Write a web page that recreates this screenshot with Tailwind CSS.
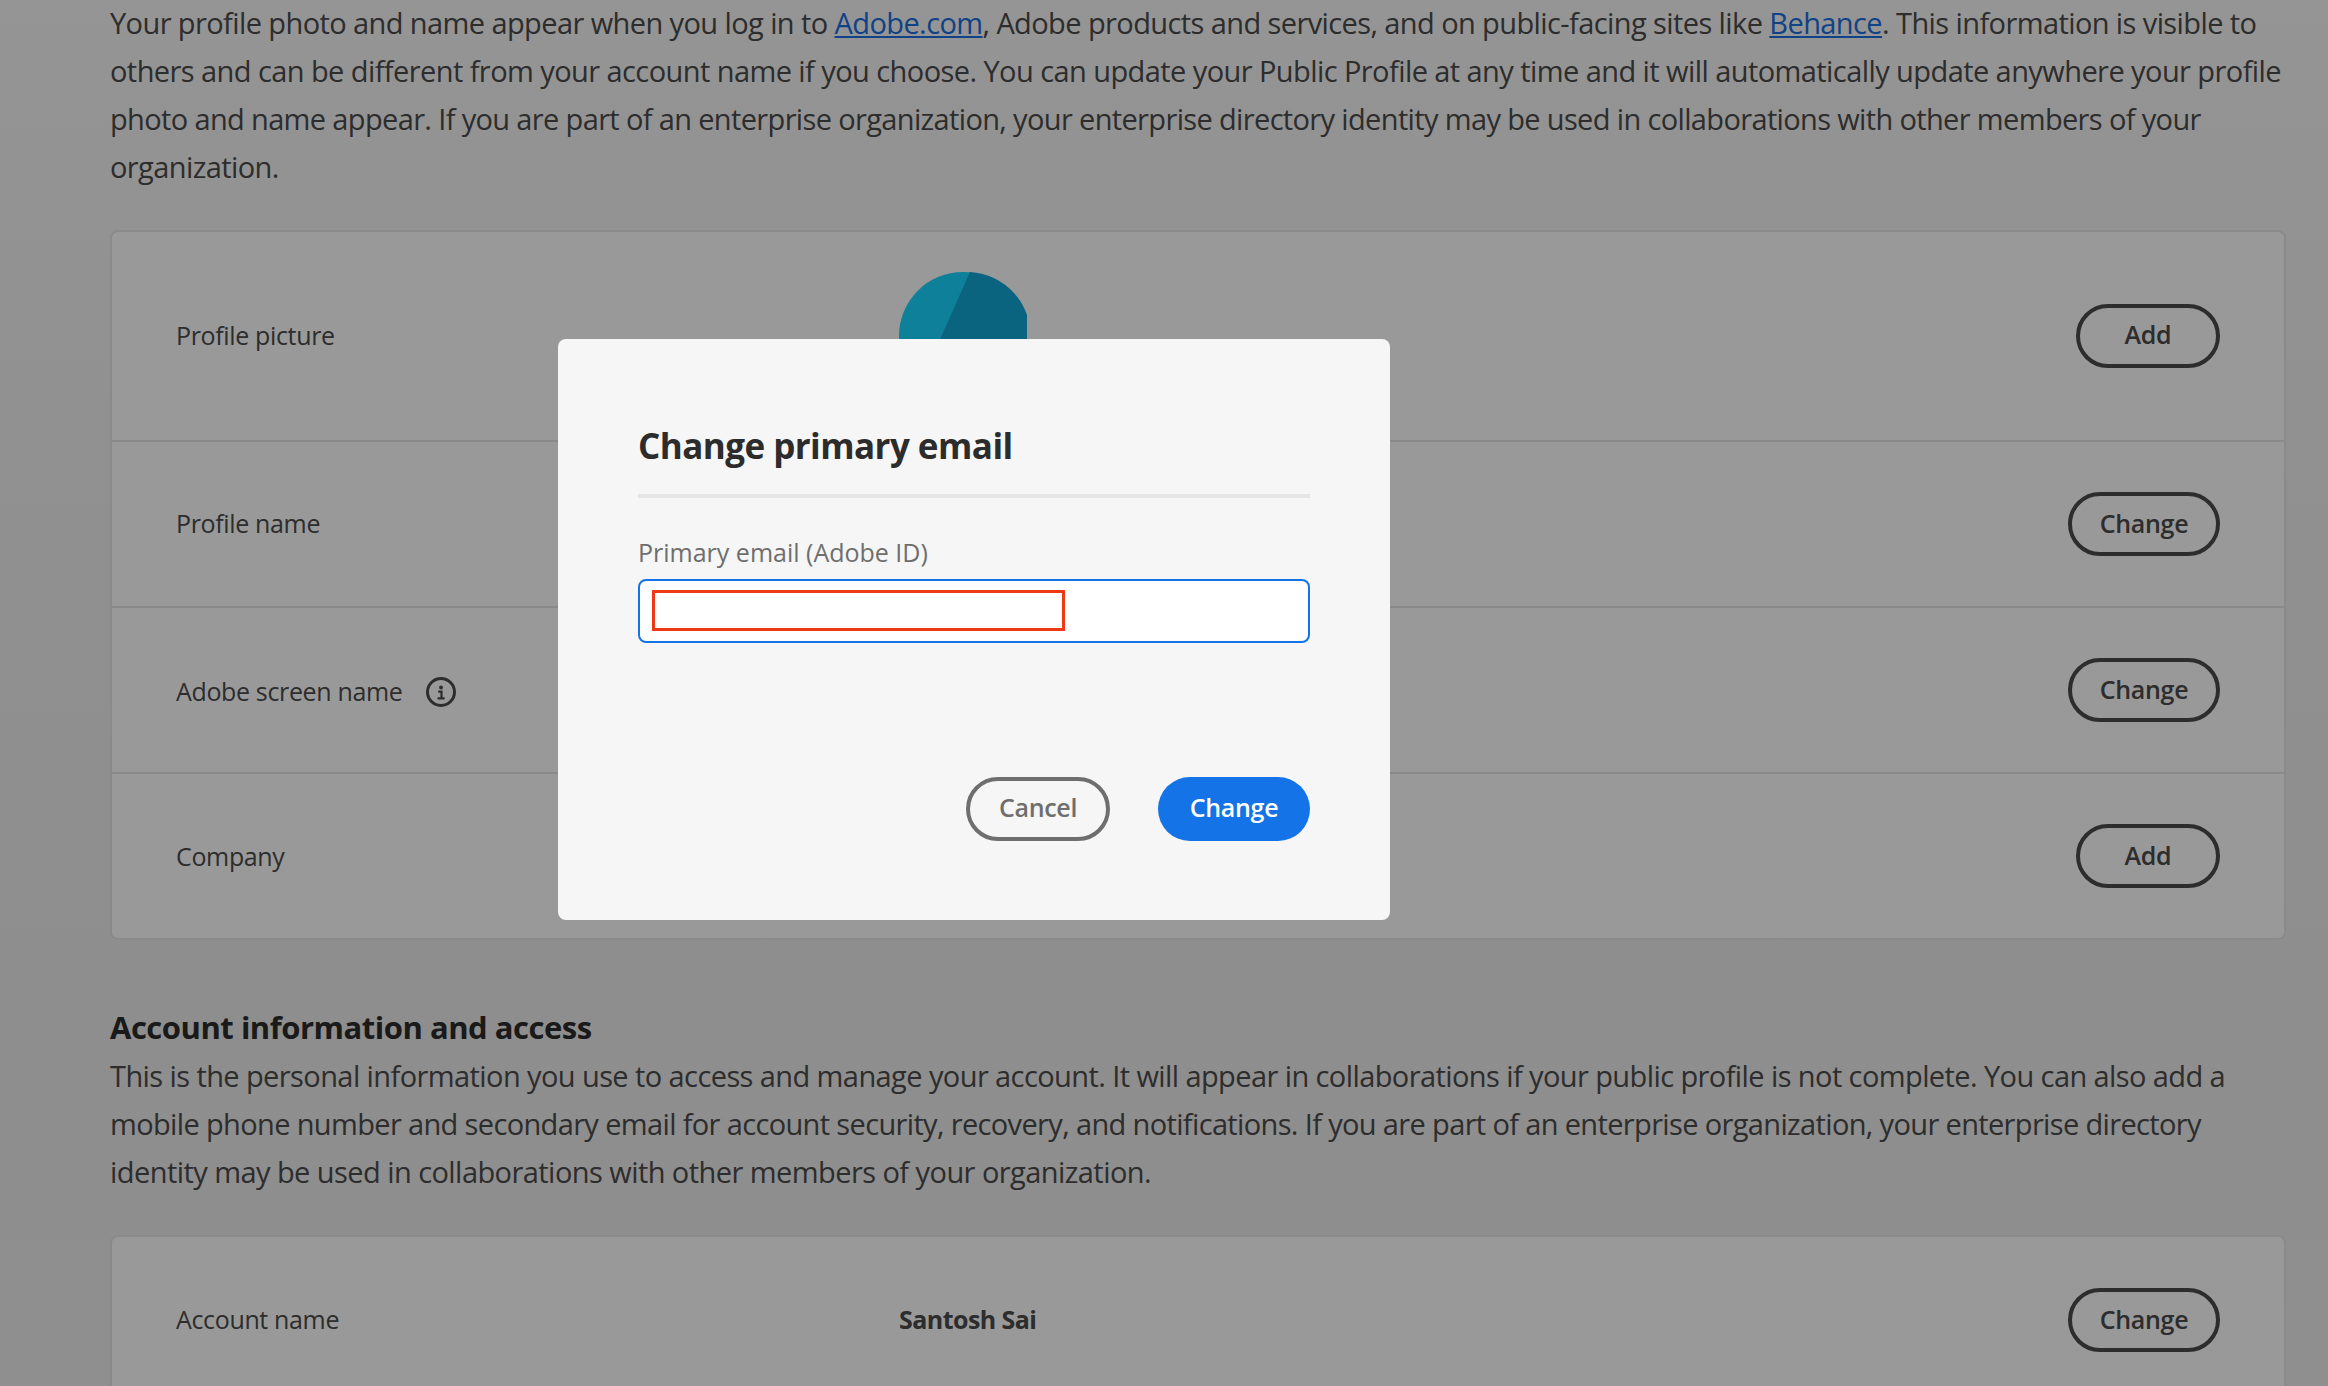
<!DOCTYPE html>
<html lang="en">
<head>
<meta charset="utf-8">
<script src="https://cdn.jsdelivr.net/npm/@tailwindcss/browser@4"></script>
<title>Change primary email</title>
</head>
<body class="h-[1386px] w-[2328px] overflow-hidden bg-[linear-gradient(180deg,#f8f8f8_0px,#f2f2f2_400px,#ededed_1000px,#eeeeee_1386px)] font-['Open_Sans',sans-serif] text-[#4b4b4b]">
<div class="relative h-[1386px] w-[2328px] overflow-hidden">
  <main class="flex flex-col pl-[110px] pr-[42px]">
    <p class="-mt-[1px] whitespace-nowrap text-[29px] leading-[48px] tracking-[-0.6px]">
      <span class="block tracking-[-0.595px]">Your profile photo and name appear when you log in to <a class="text-[#1a6fe0] underline">Adobe.com</a>, Adobe products and services, and on public-facing sites like <a class="text-[#1a6fe0] underline">Behance</a>. This information is visible to</span>
      <span class="block tracking-[-0.575px]">others and can be different from your account name if you choose. You can update your Public Profile at any time and it will automatically update anywhere your profile</span>
      <span class="block tracking-[-0.645px]">photo and name appear. If you are part of an enterprise organization, your enterprise directory identity may be used in collaborations with other members of your</span>
      <span class="block">organization.</span>
    </p>

    <section class="mt-[39px] flex flex-col rounded-lg border-2 border-[#e6e6e6] bg-white text-[25px] tracking-[-0.35px]">
      <div class="flex h-[210px] items-center justify-between border-b-2 border-[#e6e6e6] pl-[64px] pr-[64px]">
        <div class="flex items-center"><span class="w-[723px]">Profile picture</span>
          <svg class="h-[128px] w-[128px]" viewBox="0 0 128 128"><circle cx="64" cy="64" r="64" fill="#19d5ff"/><path d="M71 0 A64 64 0 0 1 64 128 L14 128 Z" fill="#11a7d5"/></svg>
        </div>
        <button class="flex h-[64px] w-[144px] items-center justify-center rounded-full border-4 border-[#4b4b4b] pb-[2px] text-[25px] font-semibold tracking-[-0.3px]">Add</button>
      </div>
      <div class="flex h-[166px] items-center justify-between border-b-2 border-[#e6e6e6] pl-[64px] pr-[64px]">
        <span>Profile name</span>
        <button class="flex h-[64px] w-[152px] items-center justify-center rounded-full border-4 border-[#4b4b4b] text-[25px] font-semibold tracking-[-0.3px]">Change</button>
      </div>
      <div class="flex h-[166px] items-center justify-between border-b-2 border-[#e6e6e6] pl-[64px] pr-[64px]">
        <div class="mt-[4px] flex items-center gap-[24px]"><span>Adobe screen name</span>
          <svg class="h-[30px] w-[30px]" viewBox="0 0 30 30" fill="none"><circle cx="15" cy="15" r="13.5" stroke="#4b4b4b" stroke-width="3"/><circle cx="15" cy="10.5" r="1.9" fill="#4b4b4b"/><path d="M12.2 14.6h3.3v6.4M11.6 21.4h7" stroke="#4b4b4b" stroke-width="2.2"/></svg>
        </div>
        <button class="flex h-[64px] w-[152px] items-center justify-center rounded-full border-4 border-[#4b4b4b] text-[25px] font-semibold tracking-[-0.3px]">Change</button>
      </div>
      <div class="flex h-[164px] items-center justify-between pl-[64px] pr-[64px]">
        <span class="mt-[2px]">Company</span>
        <button class="flex h-[64px] w-[144px] items-center justify-center rounded-full border-4 border-[#4b4b4b] text-[25px] font-semibold tracking-[-0.3px]">Add</button>
      </div>
    </section>

    <h2 class="mt-[63px] text-[31px] font-bold leading-[48px] tracking-[-0.48px] text-[#2c2c2c]">Account information and access</h2>
    <p class="mt-[1px] whitespace-nowrap text-[29px] leading-[48px]">
      <span class="block tracking-[-0.59px]">This is the personal information you use to access and manage your account. It will appear in collaborations if your public profile is not complete. You can also add a</span>
      <span class="block tracking-[-0.645px]">mobile phone number and secondary email for account security, recovery, and notifications. If you are part of an enterprise organization, your enterprise directory</span>
      <span class="block tracking-[-0.56px]">identity may be used in collaborations with other members of your organization.</span>
    </p>

    <section class="mt-[39px] flex flex-col rounded-lg border-2 border-[#e6e6e6] bg-white text-[25px] tracking-[-0.35px]">
      <div class="flex h-[166px] items-center justify-between pl-[64px] pr-[64px]">
        <div class="flex items-center"><span class="w-[723px]">Account name</span><span class="font-bold tracking-[-0.55px]">Santosh Sai</span></div>
        <button class="flex h-[64px] w-[152px] items-center justify-center rounded-full border-4 border-[#4b4b4b] text-[25px] font-semibold tracking-[-0.3px]">Change</button>
      </div>
    </section>
  </main>

  <div class="absolute inset-0 bg-black/40"></div>

  <div role="dialog" class="absolute left-[558px] top-[339px] flex h-[581px] w-[832px] flex-col rounded-lg bg-[#f6f6f6] px-[80px] text-[#2c2c2c]">
    <h1 class="mt-[78px] text-[35px] font-bold leading-[58px] tracking-[-0.55px]">Change primary email</h1>
    <div class="mt-[19px] h-[4px] bg-[#e5e5e5]"></div>
    <label class="mt-[36px] text-[25px] leading-[36px] text-[#6e6e6e]">Primary email (Adobe ID)</label>
    <div class="mt-[9px] flex h-[64px] items-center rounded-lg border-2 border-[#1473e6] bg-white pl-[12px]">
      <div class="mb-[2px] h-[41px] w-[413px] border-[3px] border-[#ee3a14]"></div>
    </div>
    <div class="mt-[134px] flex justify-end gap-[48px] text-[25px] font-semibold tracking-[-0.3px]">
      <button class="flex h-[64px] w-[144px] items-center justify-center rounded-full border-4 border-[#6e6e6e] pb-[3px] text-[#6e6e6e]">Cancel</button>
      <button class="flex h-[64px] w-[152px] items-center justify-center rounded-full bg-[#1473e6] pb-[2px] text-white">Change</button>
    </div>
  </div>
</div>
</body>
</html>
